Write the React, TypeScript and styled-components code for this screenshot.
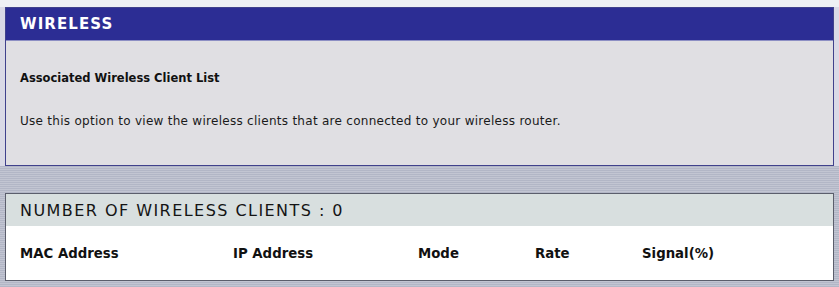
import React from 'react';
import styled, { createGlobalStyle } from 'styled-components';

const GlobalStyle = createGlobalStyle`
	html, body {
		margin: 0;
		padding: 0;
		background: #a9adbd;
	}
	body {
		font-family: 'DejaVu Sans', Verdana, sans-serif;
	}
`;

const columns = ['MAC Address', 'IP Address', 'Mode', 'Rate', 'Signal(%)'];

function App() {
	const clientCount = 0;

	return (
		<>
			<GlobalStyle />
			<Frame>
				<TopZone>
					<InfoPanel>
						<BlueHeader>WIRELESS</BlueHeader>
						<InfoBody>
							<Title>Associated Wireless Client List</Title>
							<Description>
								Use this option to view the wireless clients that are connected to your
								wireless router.
							</Description>
						</InfoBody>
					</InfoPanel>
				</TopZone>
				<Gap />
				<ClientPanel>
					<GrayHeader>NUMBER OF WIRELESS CLIENTS : {clientCount}</GrayHeader>
					<ColumnRow>
						{columns.map(c => (
							<ColumnLabel key={c}>{c}</ColumnLabel>
						))}
					</ColumnRow>
				</ClientPanel>
			</Frame>
		</>
	);
}

export default App;

const Frame = styled.div`
	width: 839px;
	height: 287px;
	display: flex;
	flex-direction: column;
	background: repeating-linear-gradient(
		to bottom,
		#b2b6c6 0px,
		#b2b6c6 1px,
		#c2c5d2 1px,
		#c2c5d2 2px
	);
	overflow: hidden;
`;

const TopZone = styled.div`
	background: linear-gradient(to bottom, #eef0f4 0px, #eef0f4 7px, #d9d9e6 7px);
	padding: 7px 5px 0 5px;
`;

const InfoPanel = styled.div`
	height: 159px;
	box-sizing: border-box;
	border: 1px solid #40418c;
	background: #e0dfe3;
	display: flex;
	flex-direction: column;
`;

const BlueHeader = styled.div`
	height: 32px;
	background: #2c2d94;
	border-bottom: 1px solid #8d8fc4;
	color: #ffffff;
	font-size: 15px;
	font-weight: bold;
	letter-spacing: 1.1px;
	padding-left: 14px;
	display: flex;
	align-items: center;
`;

const InfoBody = styled.div`
	padding: 0 14px;
	display: flex;
	flex-direction: column;
`;

const Title = styled.div`
	margin-top: 30px;
	font-size: 11.5px;
	font-weight: bold;
	color: #111111;
	line-height: 14px;
`;

const Description = styled.div`
	margin-top: 29px;
	font-size: 12px;
	letter-spacing: 0.28px;
	color: #1a1a1a;
	line-height: 14px;
`;

const Gap = styled.div`
	height: 27px;
`;

const ClientPanel = styled.div`
	margin: 0 5px;
	height: 88px;
	box-sizing: border-box;
	border: 1px solid #5b5e6c;
	background: #ffffff;
	display: flex;
	flex-direction: column;
`;

const GrayHeader = styled.div`
	height: 32px;
	background: #d8dfdf;
	color: #141414;
	font-size: 16px;
	letter-spacing: 1.45px;
	padding-left: 14px;
	display: flex;
	align-items: center;
`;

const ColumnRow = styled.div`
	flex: 1;
	display: grid;
	grid-template-columns: 213px 185px 117px 107px 1fr;
	align-items: center;
	padding-left: 14px;
`;

const ColumnLabel = styled.div`
	font-size: 13.3px;
	font-weight: bold;
	color: #111111;
`;
